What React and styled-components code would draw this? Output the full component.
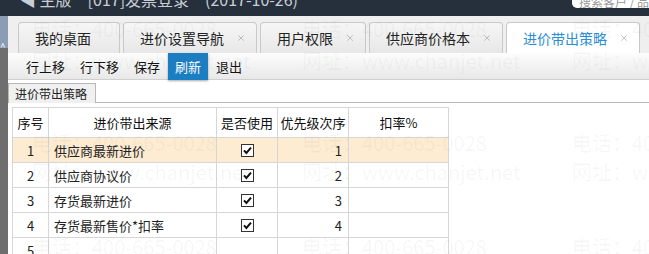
import styled, { createGlobalStyle, css } from "styled-components";
import { X } from "lucide-react";

const GlobalStyle = createGlobalStyle`
  body {
    margin: 0;
    overflow: hidden;
    font-family: "Microsoft YaHei", "Noto Sans CJK SC", sans-serif;
    color: #111;
  }
`;

const tabs = [
  { label: "我的桌面", closable: false },
  { label: "进价设置导航", closable: true },
  { label: "用户权限", closable: true },
  { label: "供应商价格本", closable: true },
  { label: "进价带出策略", closable: true, active: true },
];

const tools = ["行上移", "行下移", "保存", "刷新", "退出"];

const rows = [
  { no: 1, source: "供应商最新进价", used: true, order: 1, selected: true },
  { no: 2, source: "供应商协议价", used: true, order: 2 },
  { no: 3, source: "存货最新进价", used: true, order: 3 },
  { no: 4, source: "存货最新售价*扣率", used: true, order: 4 },
  { no: 5, source: "", used: false, order: "" },
];

// 透かし（電話・URL）
const marks = [
  { top: 19, text: "电话：400-665-0028" },
  { top: 51, text: "网址：www.chanjet.net" },
  { top: 133, text: "电话：400-665-0028" },
  { top: 162, text: "网址：www.chanjet.net" },
  { top: 237, text: "电话：400-665-0028" },
];

export default function App() {
  return (
    <Page>
      <GlobalStyle />
      <TopBar>
        <Title>
          <span>◀ 主版</span>
          <span>[017]发票登录</span>
          <span>(2017-10-26)</span>
        </Title>
        <SearchBox>搜索客户 / 品名</SearchBox>
      </TopBar>
      <Body>
        <SideStrip>
          <StripTop>
            <Chevron>^</Chevron>
          </StripTop>
        </SideStrip>
        <Main>
          <TabBar>
            {tabs.map((t) => (
              <Tab key={t.label} $active={t.active}>
                {t.label}
                {t.closable && (
                  <Close>
                    <X size={10} strokeWidth={1.4} />
                  </Close>
                )}
              </Tab>
            ))}
          </TabBar>
          <Toolbar>
            {tools.map((t) => (
              <ToolButton key={t} $active={t === "刷新"}>
                {t}
              </ToolButton>
            ))}
          </Toolbar>
          <Content>
            <SubTabRow>
              <SubTab>进价带出策略</SubTab>
            </SubTabRow>
            <GridWrap>
              <Grid>
                <colgroup>
                  <col style={{ width: 36 }} />
                  <col style={{ width: 168 }} />
                  <col style={{ width: 61 }} />
                  <col style={{ width: 71 }} />
                  <col style={{ width: 100 }} />
                </colgroup>
                <thead>
                  <tr>
                    <Th>序号</Th>
                    <Th>进价带出来源</Th>
                    <Th>是否使用</Th>
                    <Th>优先级次序</Th>
                    <Th>扣率%</Th>
                  </tr>
                </thead>
                <tbody>
                  {rows.map((r) => (
                    <Row key={r.no} $selected={r.selected}>
                      <Td $align="center">{r.no}</Td>
                      <Td>{r.source}</Td>
                      <Td $align="center">{r.used && <CheckBox />}</Td>
                      <Td $align="right">{r.order}</Td>
                      <Td />
                    </Row>
                  ))}
                </tbody>
              </Grid>
            </GridWrap>
          </Content>
        </Main>
      </Body>
      <Watermarks>
        {marks.map((m, i) =>
          [32, 302, 572].map((left) => (
            <Mark key={`${i}-${left}`} style={{ top: m.top, left }}>
              {m.text}
            </Mark>
          ))
        )}
      </Watermarks>
    </Page>
  );
}

const CheckBox = () => (
  <CheckSvg width="13" height="13" viewBox="0 0 13 13">
    <rect x="0.5" y="0.5" width="12" height="12" fill="#fff" stroke="#333" />
    <path d="M3 6.4 L5.4 9 L10 3.6" fill="none" stroke="#111" strokeWidth="2" />
  </CheckSvg>
);

const Page = styled.div`
  position: relative;
  width: 649px;
  height: 254px;
  overflow: hidden;
  background: #fff;
`;

const TopBar = styled.div`
  display: flex;
  justify-content: space-between;
  height: 16px;
  background: #26303d;
  overflow: hidden;
`;

const Title = styled.div`
  display: flex;
  gap: 16px;
  margin: -9px 0 0 20px;
  font-size: 16px;
  line-height: 16px;
  color: #c9ced6;
  white-space: nowrap;
`;

const SearchBox = styled.div`
  width: 70px;
  height: 8px;
  padding-left: 7px;
  background: #fff;
  border-radius: 0 0 0 5px;
  font-size: 12px;
  line-height: 4px;
  color: #999;
  white-space: nowrap;
  overflow: hidden;
`;

const Body = styled.div`
  display: flex;
  height: 238px;
`;

const SideStrip = styled.div`
  display: flex;
  flex-direction: column;
  flex-shrink: 0;
  width: 8px;
  background: #6e6e6e;
`;

const StripTop = styled.div`
  position: relative;
  height: 32px;
  background: #8b9cb5;
`;

const Chevron = styled.span`
  position: absolute;
  left: 0;
  top: 26px;
  font-size: 10px;
  line-height: 10px;
  color: #fff;
`;

const Main = styled.div`
  flex: 1;
  display: flex;
  flex-direction: column;
  min-width: 0;
`;

const TabBar = styled.div`
  display: flex;
  flex-shrink: 0;
  align-items: flex-end;
  gap: 3px;
  height: 37px;
  padding-left: 10px;
  background: #efefef;
`;

const Tab = styled.div`
  display: flex;
  align-items: center;
  box-sizing: border-box;
  min-width: 102px;
  height: 31px;
  padding: 0 10px 0 16px;
  border: 1px solid #c9c9c9;
  border-bottom: none;
  border-radius: 4px 4px 0 0;
  background: linear-gradient(#f6f6f6, #e7e7e7);
  font-size: 14px;
  color: #222;
  white-space: nowrap;
  ${({ $active }) =>
    $active &&
    css`
      background: #fff;
      color: #2a8ed6;
    `}
`;

const Close = styled.span`
  display: flex;
  margin-left: 12px;
  color: #999;
`;

const Toolbar = styled.div`
  display: flex;
  flex-shrink: 0;
  gap: 1px;
  height: 26px;
  padding-left: 11px;
  border-bottom: 1px solid #cfcfcf;
  background: linear-gradient(#fdfdfd, #e8e8e8);
`;

const ToolButton = styled.div`
  display: flex;
  align-items: center;
  padding: 0 7px;
  font-size: 13px;
  color: #111;
  ${({ $active }) =>
    $active &&
    css`
      height: 27px;
      background: #1b7dc2;
      color: #fff;
      box-shadow: 0 1px 2px rgba(0, 0, 0, 0.35);
    `}
`;

const Content = styled.div`
  flex-shrink: 0;
  padding-top: 3px;
`;

const SubTabRow = styled.div`
  display: flex;
  height: 19px;
  border-bottom: 1px solid #b8b8b8;
`;

const SubTab = styled.div`
  box-sizing: border-box;
  width: 88px;
  height: 20px;
  padding-left: 6px;
  border: 1px solid #b8b8b8;
  border-bottom: none;
  background: #f0f0f0;
  font-size: 12px;
  line-height: 19px;
  color: #222;
`;

const GridWrap = styled.div`
  padding: 4px 0 0 4px;
`;

const Grid = styled.table`
  table-layout: fixed;
  width: 437px;
  border-collapse: collapse;
  font-size: 13px;
`;

const Th = styled.th`
  height: 29px;
  padding: 0;
  border: 1px solid #d6d6d6;
  font-weight: normal;
  text-align: center;
  color: #111;
`;

const Row = styled.tr`
  background: ${({ $selected }) => ($selected ? "#fdebd2" : "#fff")};
`;

const Td = styled.td`
  height: 24px;
  padding: 0 6px 0 5px;
  border: 1px solid #d6d6d6;
  text-align: ${({ $align }) => $align || "left"};
  color: #222;
  white-space: nowrap;
  ${({ $align }) =>
    $align === "center" &&
    css`
      padding: 0;
    `}
`;

const CheckSvg = styled.svg`
  display: block;
  margin: 0 auto;
`;

const Watermarks = styled.div`
  position: absolute;
  inset: 0;
  pointer-events: none;
`;

const Mark = styled.span`
  position: absolute;
  font-size: 20px;
  line-height: 20px;
  color: rgba(110, 110, 110, 0.06);
  white-space: nowrap;
`;
